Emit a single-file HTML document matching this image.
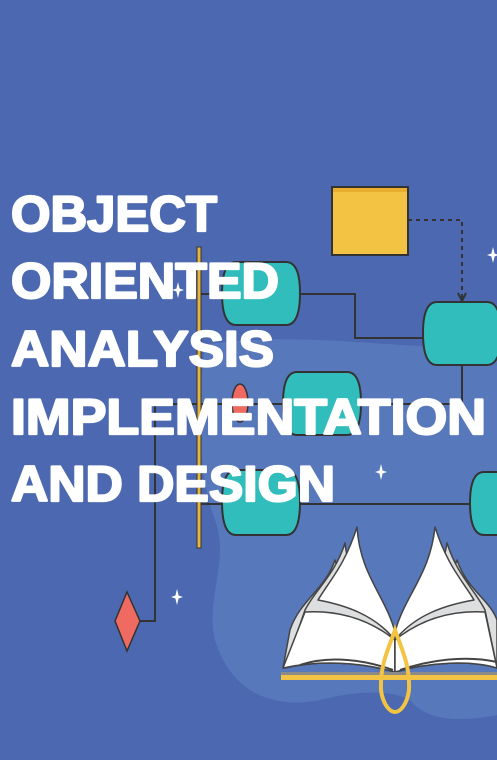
<!DOCTYPE html>
<html><head><meta charset="utf-8"><style>
html,body{margin:0;padding:0;background:#4b68b0;}
svg{display:block}
</style></head><body>
<svg width="497" height="760" viewBox="0 0 497 760" xmlns="http://www.w3.org/2000/svg">
<rect width="497" height="760" fill="#4b68b0"/>
<path d="M205 345 C260 335 330 340 400 345 C450 348 497 345 497 345 L497 715 C470 720 430 725 410 700 C390 690 360 690 320 700 C270 710 230 690 215 640 C205 600 230 560 215 520 C200 480 195 420 205 345 Z" fill="#5878bc"/>
<g stroke="#333" stroke-width="2" fill="none">
<path d="M199 294 H226 M296 294 H355 V338 H427"/>
<path d="M462 365 V404 M155 404 H233 M248 404 H288 M357 404 H462"/>
<path d="M155 404 V621 H140"/>
<path d="M199 504 H226 M296 504 H475"/>
<path d="M408 220 H462 V298" stroke-dasharray="4 4"/>
<path d="M458 293 L462 301 L466 293"/>
</g>
<rect x="332" y="187" width="76" height="68" fill="#f3c444" stroke="#333" stroke-width="2"/>
<rect x="333" y="188" width="74" height="4" fill="#e8ae2e"/>
<rect x="197" y="247" width="4" height="301" fill="#e9b43a" stroke="#333" stroke-width="1"/>
<g fill="#31bdbb" stroke="#333" stroke-width="2">
<path d="M236 262 H286 Q300 262 300 293 Q300 325 286 325 H236 Q222 325 222 293 Q222 262 236 262 Z"/>
<path d="M437 302 H487 Q501 302 501 333 Q501 365 487 365 H437 Q423 365 423 333 Q423 302 437 302 Z"/>
<path d="M297 372 H347 Q361 372 361 403 Q361 435 347 435 H297 Q283 435 283 403 Q283 372 297 372 Z"/>
<path d="M236 470 H286 Q300 470 300 502 Q300 535 286 535 H236 Q222 535 222 502 Q222 470 236 470 Z"/>
<path d="M484 472 H500 V535 H484 Q470 535 470 503 Q470 472 484 472 Z"/>
</g>
<ellipse cx="240" cy="403" rx="8" ry="19" fill="#ef6b62" stroke="#333" stroke-width="1.5"/>
<path d="M127 592 L140 621 L127 651 L115 621 Z" fill="#ef6b62" stroke="#333" stroke-width="1.5"/>
<!-- book -->
<g stroke="#444" stroke-width="1.5" stroke-linejoin="round">
<path d="M395 640 C375 605 345 600 335 560 C325 590 300 600 290 630 L283 668 C320 660 360 662 395 672 Z" fill="#dcdedf"/>
<path d="M395 640 C380 605 350 590 345 543 C335 575 315 590 305 610 L285 668 C320 660 360 662 395 672 Z" fill="#dcdedf"/>
<path d="M395 632 C385 595 360 575 357 527 C345 565 330 580 318 600 C345 605 375 615 395 640 Z" fill="#fff"/>
<path d="M395 640 C370 620 340 610 305 612 L283 668 C320 660 360 662 395 672 Z" fill="#fff"/>
<path d="M395 640 C415 605 445 600 457 560 C467 590 490 600 497 620 L497 668 C470 660 430 662 395 672 Z" fill="#dcdedf"/>
<path d="M395 640 C410 605 440 590 447 543 C457 575 475 590 485 610 L497 668 C470 660 430 662 395 672 Z" fill="#dcdedf"/>
<path d="M395 632 C405 595 430 575 435 527 C447 565 462 580 474 600 C445 605 415 615 395 640 Z" fill="#fff"/>
<path d="M395 640 C420 620 450 610 485 612 L497 668 C470 660 430 662 395 672 Z" fill="#fff"/>
</g>
<path d="M300 665 C330 655 365 660 393 670 M400 670 C430 660 465 655 497 662" stroke="#444" stroke-width="2" fill="none"/>
<rect x="281" y="672" width="216" height="3" fill="#8a8a8a"/>
<rect x="281" y="675" width="216" height="5" fill="#f3c444"/>
<path d="M395 630 C388 650 380 665 381 690 C383 705 390 712 395 712 C400 712 407 705 409 690 C410 665 402 650 395 630 Z" fill="none" stroke="#f3c444" stroke-width="4"/>
<g fill="#fff">
<path d="M178 282 L180 290 L178 298 L176 290 Z M172 290 L178 288 L184 290 L178 292 Z"/>
<path d="M493 247 L495 255 L493 263 L491 255 Z M487 255 L493 253 L499 255 L493 257 Z"/>
<path d="M381 464 L383 472 L381 480 L379 472 Z M375 472 L381 470 L387 472 L381 474 Z"/>
<path d="M177 589 L179 597 L177 605 L175 597 Z M171 597 L177 595 L183 597 L177 599 Z"/>
</g>
<g font-family="Liberation Sans, Arial, sans-serif" font-weight="bold" font-size="50" fill="#fff" stroke="#fff" stroke-width="2.2" stroke-linejoin="round">
<text x="11" y="231" textLength="206" lengthAdjust="spacingAndGlyphs">OBJECT</text>
<text x="11" y="298" textLength="268" lengthAdjust="spacingAndGlyphs">ORIENTED</text>
<text x="11" y="366" textLength="263" lengthAdjust="spacingAndGlyphs">ANALYSIS</text>
<text x="11" y="434" textLength="475" lengthAdjust="spacingAndGlyphs">IMPLEMENTATION</text>
<text x="11" y="501" textLength="324" lengthAdjust="spacingAndGlyphs">AND DESIGN</text>
</g>
</svg>
</body></html>
